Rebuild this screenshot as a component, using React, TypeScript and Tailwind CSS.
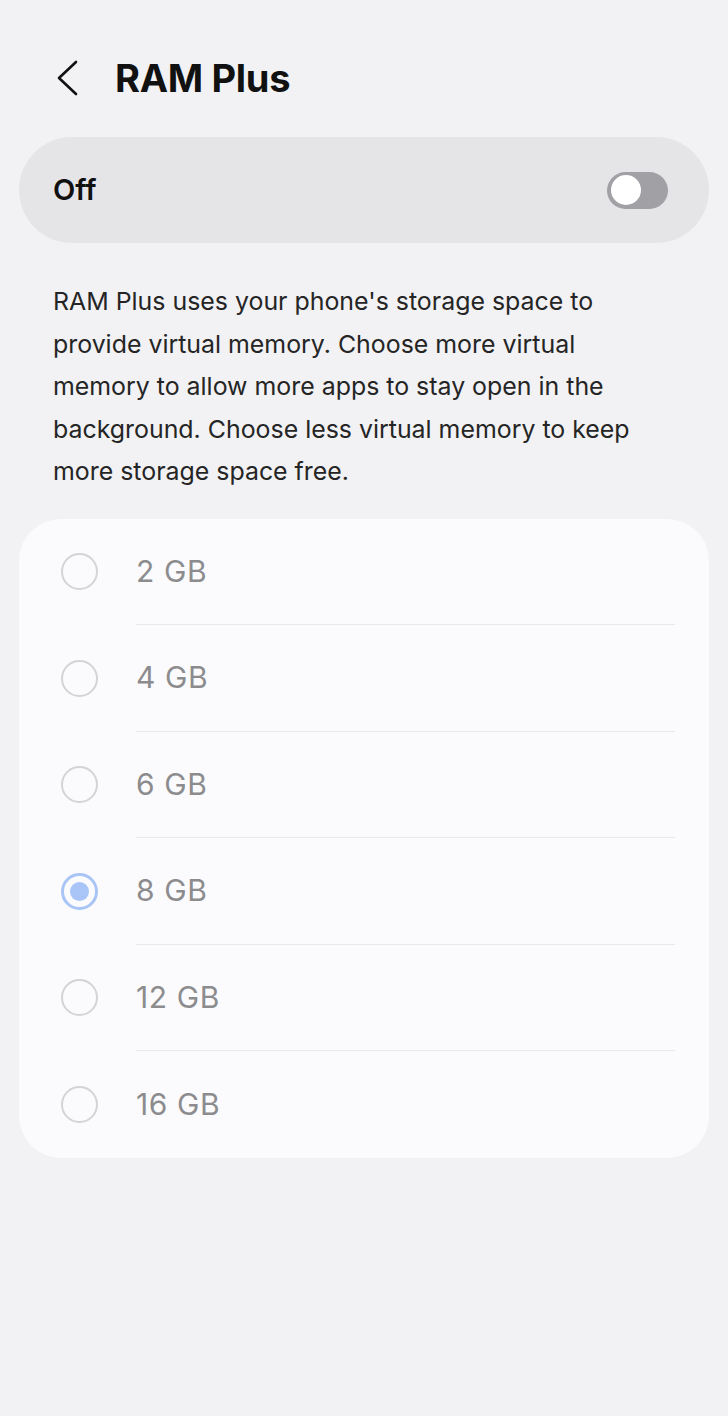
export default function App() {
  const sizes = ['2 GB', '4 GB', '6 GB', '8 GB', '12 GB', '16 GB'];
  const selected = '8 GB';

  return (
    <div
      className="w-[728px] h-[1416px] bg-[#f2f2f4] overflow-hidden"
      style={{ fontFamily: 'Inter, "Noto Sans", sans-serif' }}
    >
      {/* header */}
      <div className="flex items-center h-[76px] mt-[40px] pl-[55px]">
        <svg width="24" height="36" viewBox="0 0 24 36" fill="none">
          <path d="M21 2 L4 18 L21 34" stroke="#111" strokeWidth="2.6" strokeLinecap="round" strokeLinejoin="round" />
        </svg>
        <h1 className="ml-[36px] text-[38px] font-bold text-[#111] tracking-[-0.3px]">RAM Plus</h1>
      </div>

      {/* master switch */}
      <div className="mx-[19px] mt-[21px] h-[106px] rounded-full bg-[#e5e5e8] flex items-center justify-between pl-[34px] pr-[41px]">
        <span className="text-[29px] font-semibold text-[#111]">Off</span>
        <div className="w-[61px] h-[37px] rounded-full bg-[#a1a1a5] flex items-center pl-[4px]">
          <div className="w-[30px] h-[30px] rounded-full bg-white" />
        </div>
      </div>

      <p className="mt-[37px] ml-[53px] w-[600px] text-[24.9px] leading-[42.5px] text-[#252525]">
        RAM Plus uses your phone's storage space to provide virtual memory. Choose more virtual memory to allow more apps to stay open in the background. Choose less virtual memory to keep more storage space free.
      </p>

      {/* options */}
      <div className="mx-[19px] mt-[26px] rounded-[42px] bg-[#fbfbfd]">
        {sizes.map((size, i) => (
          <div key={size} className="flex items-stretch h-[106.5px]">
            <div className="w-[117px] flex items-center justify-center pl-[3px]">
              {size === selected ? (
                <div className="w-[37px] h-[37px] rounded-full border-[3px] border-[#a9c5f6] flex items-center justify-center">
                  <div className="w-[19px] h-[19px] rounded-full bg-[#a9c5f8]" />
                </div>
              ) : (
                <div className="w-[37px] h-[37px] rounded-full border-[2.5px] border-[#d4d4d6]" />
              )}
            </div>
            <div
              className={`flex-1 mr-[34px] flex items-center ${
                i < sizes.length - 1 ? 'border-b border-[#e8e8ea]' : ''
              }`}
            >
              <span className="text-[30px] text-[#8c8c8e] tracking-[0.6px]">{size}</span>
            </div>
          </div>
        ))}
      </div>
    </div>
  );
}
